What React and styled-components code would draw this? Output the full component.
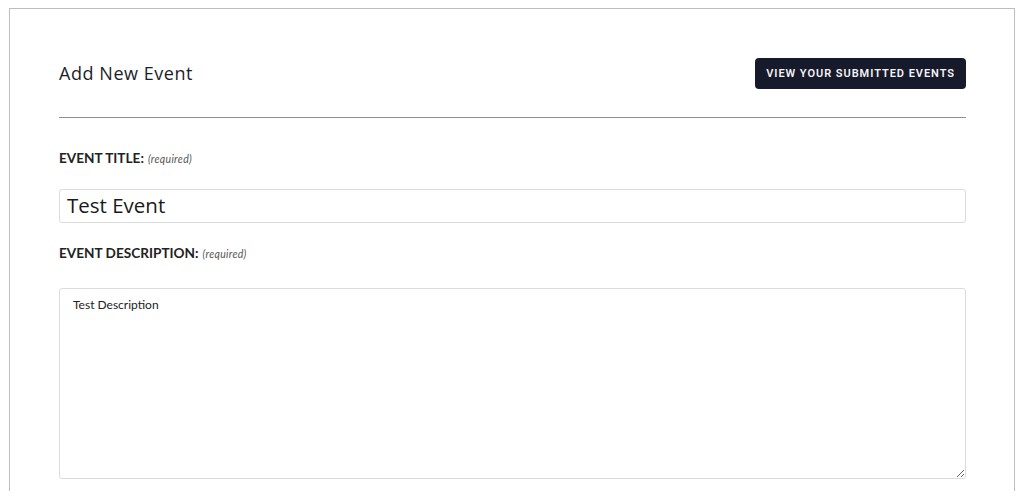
import React from "react";
import styled, { createGlobalStyle } from "styled-components";

const Global = createGlobalStyle`
  html, body { margin: 0; padding: 0; background: #fff; }
  body { font-family: Lato, "Open Sans", sans-serif; }
  * { box-sizing: border-box; }
`;

const Page = styled.div`
  padding: 8px 9px 0 9px;
  height: 499px;
  overflow: hidden;
`;

const Frame = styled.div`
  border: 1px solid #bdbdbd;
  border-bottom: none;
  height: 483px;
  padding: 49px 48px 0 49px;
  overflow: hidden;
`;

const Header = styled.div`
  display: flex;
  align-items: center;
  justify-content: space-between;
  padding-bottom: 28px;
  border-bottom: 1px solid #8f8f8f;
`;

const Title = styled.h2`
  margin: 0 0 1px 0;
  font-family: "Open Sans", Inter, sans-serif;
  font-weight: 400;
  font-size: 18px;
  color: #1d1d2b;
  letter-spacing: 0.55px;
`;

const ViewButton = styled.button`
  height: 31px;
  padding: 0 11px;
  background: #161a2b;
  border: none;
  border-radius: 4px;
  color: #f4f4f6;
  font-family: Roboto, Inter, sans-serif;
  font-weight: 600;
  font-size: 11px;
  letter-spacing: 0.96px;
  text-transform: uppercase;
  cursor: pointer;
`;

const Field = styled.div`
  display: flex;
  flex-direction: column;
`;

const Label = styled.label`
  font-family: Lato, sans-serif;
  font-weight: 700;
  font-size: 13.6px;
  line-height: 16px;
  color: #222;
  margin-top: ${(p) => p.$top}px;
  margin-bottom: ${(p) => p.$bottom}px;
  text-transform: uppercase;
`;

const Req = styled.em`
  font-weight: 400;
  font-size: 10.5px;
  color: #555;
  text-transform: none;
  margin-left: 4px;
  letter-spacing: 0.3px;
`;

const TextInput = styled.input`
  height: 34px;
  width: 100%;
  border: 1px solid #dcdcdc;
  border-radius: 3px;
  padding: 0 7px 2px 7px;
  font-family: "Open Sans", Inter, sans-serif;
  font-size: 20.5px;
  color: #1a1a1a;
  outline: none;
`;

const TextArea = styled.textarea`
  height: 191px;
  width: 100%;
  border: 1px solid #dcdcdc;
  border-radius: 3px;
  padding: 8px 13px;
  font-family: Lato, sans-serif;
  font-size: 12px;
  color: #222;
  outline: none;
  resize: vertical;
`;

export default function App() {
  return (
    <>
      <Global />
      <Page>
        <Frame>
          <Header>
            <Title>Add New Event</Title>
            <ViewButton>View your submitted events</ViewButton>
          </Header>
          <Field>
            <Label $top={32} $bottom={22}>
              Event Title:<Req>(required)</Req>
            </Label>
            <TextInput defaultValue="Test Event" />
          </Field>
          <Field>
            <Label $top={22} $bottom={26}>
              Event Description:<Req>(required)</Req>
            </Label>
            <TextArea defaultValue="Test Description" />
          </Field>
        </Frame>
      </Page>
    </>
  );
}
